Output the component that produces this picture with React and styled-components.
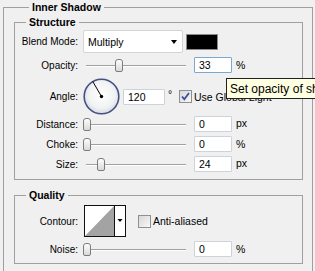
import React from 'react';
import styled, { createGlobalStyle } from 'styled-components';

const Global = createGlobalStyle`
  html, body {
    margin: 0;
    padding: 0;
    background: #f0f0f0;
    overflow: hidden;
  }
  body {
    font-family: "Liberation Sans", Arial, sans-serif;
    font-size: 10px;
    color: #000;
  }
`;

const Page = styled.div`
  position: relative;
  width: 315px;
  height: 271px;
  overflow: hidden;
  padding-left: 3px;
  box-sizing: border-box;
`;

const Group = styled.fieldset`
  box-sizing: border-box;
  margin: ${(p) => p.$margin || '0'};
  padding: ${(p) => p.$padding || '0'};
  width: ${(p) => p.$width}px;
  height: ${(p) => p.$height}px;
  min-width: 0;
  border: 1px solid #a0a0a0;
`;

const Title = styled.legend`
  font-weight: bold;
  font-size: 10.5px;
  line-height: 14px;
  padding: 0 3px;
  margin-left: ${(p) => p.$indent}px;
`;

const Row = styled.div`
  display: flex;
  align-items: center;
  height: ${(p) => p.$h}px;
  margin-top: ${(p) => p.$mt}px;
`;

const Label = styled.span`
  width: 64px;
  flex: none;
  text-align: right;
  padding-right: 1px;
  box-sizing: border-box;
  margin-right: 4px;
  white-space: nowrap;
`;

const Select = styled.div`
  box-sizing: border-box;
  width: 100px;
  height: 23px;
  background: #fff;
  border: 1px solid #d4d4d4;
  border-radius: 2px;
  display: flex;
  align-items: center;
  justify-content: space-between;
  padding: 0 5px 0 4px;
  font-size: 10.5px;
`;

const Arrow = styled.span`
  width: 0;
  height: 0;
  border-left: 3.5px solid transparent;
  border-right: 3.5px solid transparent;
  border-top: 4px solid #000;
  margin-top: 1px;
`;

const Swatch = styled.div`
  box-sizing: border-box;
  width: 32px;
  height: 16px;
  margin-left: 3px;
  background: #000;
  border: 1px solid #8a8a8a;
`;

const SliderBox = styled.div`
  position: relative;
  width: 106px;
  height: 13px;
  flex: none;
`;

const Track = styled.div`
  position: absolute;
  left: 3px;
  right: 3px;
  top: 6px;
  height: 0;
  border-top: 1px solid #a0a0a0;
  border-bottom: 1px solid #fff;
`;

const Thumb = styled.div`
  position: absolute;
  top: 0;
  box-sizing: border-box;
  width: 8px;
  height: 13px;
  border: 1px solid #7c7c7c;
  border-radius: 3px 3px 2px 2px;
  background: linear-gradient(#fdfdfd, #d9d9d9);
`;

const Field = styled.div`
  box-sizing: border-box;
  width: ${(p) => p.$w}px;
  height: 16px;
  margin-left: ${(p) => p.$ml}px;
  background: #fff;
  border: 1px solid ${(p) => (p.$focus ? '#7aa7d6' : '#cdd3da')};
  border-radius: 1px;
  padding-left: 4px;
  display: flex;
  align-items: center;
  font-size: 10.5px;
  flex: none;
`;

const Unit = styled.span`
  margin-left: 4px;
  font-size: 10.5px;
  margin-top: ${(p) => p.$up || 0}px;
`;

const Degree = styled.span`
  width: 11px;
  margin-left: 3px;
  font-size: 10.5px;
  align-self: flex-start;
  margin-top: 10px;
`;

const Box = styled.div`
  box-sizing: border-box;
  width: ${(p) => p.$s}px;
  height: ${(p) => p.$s}px;
  margin-left: ${(p) => p.$ml}px;
  border: 1px solid #8f8f8f;
  background: linear-gradient(135deg, #d8d8d8, #f8f8f8);
  display: flex;
  align-items: center;
  justify-content: center;
  flex: none;
`;

const BoxText = styled.span`
  margin-left: 2px;
  font-size: 10.5px;
  white-space: nowrap;
`;

const ContourPick = styled.svg`
  display: block;
  margin-left: 1px;
  flex: none;
`;

const Tip = styled.div`
  position: absolute;
  left: 226px;
  top: 78px;
  height: 21px;
  width: 110px;
  box-sizing: border-box;
  background: #ffffe1;
  border: 1px solid #202020;
  padding-left: 3px;
  display: flex;
  align-items: center;
  font-size: 12px;
  white-space: nowrap;
`;

const Slider = ({ pos }) => (
  <SliderBox>
    <Track />
    <Thumb style={{ left: Math.round(pos * 98) }} />
  </SliderBox>
);

const Dial = () => (
  <svg width="37" height="37" viewBox="0 0 37 37" style={{ flex: 'none' }}>
    <defs>
      <radialGradient id="dialFill" cx="50%" cy="45%" r="55%">
        <stop offset="0%" stopColor="#ffffff" />
        <stop offset="70%" stopColor="#f1f2f4" />
        <stop offset="100%" stopColor="#d6dae3" />
      </radialGradient>
    </defs>
    <circle cx="18.5" cy="18.5" r="17.3" fill="url(#dialFill)" stroke="#43527f" strokeWidth="1.6" />
    <line x1="18.5" y1="18.5" x2="9.8" y2="3.6" stroke="#000" strokeWidth="1" />
    <circle cx="18.5" cy="18.5" r="1.7" fill="#000" />
  </svg>
);

const Check = () => (
  <svg width="9" height="9" viewBox="0 0 9 9">
    <path d="M1 4.5 L3.3 7.2 L8 1" fill="none" stroke="#3b50a0" strokeWidth="1.8" />
  </svg>
);

export default function App() {
  return (
    <Page>
      <Global />
      <Group $width={310} $height={290} $padding="1px 0 0 10px">
        <Title $indent={15}>Inner Shadow</Title>

        <Group $width={289} $height={165}>
          <Title $indent={11}>Structure</Title>
          <Row $h={23} $mt={1}>
            <Label>Blend Mode:</Label>
            <Select>
              Multiply
              <Arrow />
            </Select>
            <Swatch />
          </Row>
          <Row $h={16} $mt={4}>
            <Label>Opacity:</Label>
            <Slider pos={0.33} />
            <Field $w={38} $ml={5} $focus>33</Field>
            <Unit>%</Unit>
          </Row>
          <Row $h={37} $mt={5}>
            <Label>Angle:</Label>
            <Dial />
            <Field $w={42} $ml={3}>120</Field>
            <Degree>°</Degree>
            <Box $s={13} $ml={0}>
              <Check />
            </Box>
            <BoxText>Use Global Light</BoxText>
          </Row>
          <Row $h={16} $mt={1}>
            <Label>Distance:</Label>
            <Slider pos={0} />
            <Field $w={38} $ml={5}>0</Field>
            <Unit $up={-3}>px</Unit>
          </Row>
          <Row $h={16} $mt={4}>
            <Label>Choke:</Label>
            <Slider pos={0} />
            <Field $w={38} $ml={5}>0</Field>
            <Unit>%</Unit>
          </Row>
          <Row $h={16} $mt={4}>
            <Label>Size:</Label>
            <Slider pos={0.14} />
            <Field $w={38} $ml={5}>24</Field>
            <Unit $up={-3}>px</Unit>
          </Row>
        </Group>

        <Group $width={289} $height={76} $margin="8px 0 0 0">
          <Title $indent={11}>Quality</Title>
          <Row $h={32} $mt={3}>
            <Label>Contour:</Label>
            <ContourPick width="42" height="32" viewBox="0 0 42 32">
              <rect x="0.5" y="0.5" width="41" height="31" fill="#fff" stroke="#111" />
              <polygon points="1,31 30,1 30,31" fill="#a3a3a3" />
              <line x1="30.5" y1="0" x2="30.5" y2="32" stroke="#111" />
              <polygon points="33.5,14 38.5,14 36,17" fill="#000" />
            </ContourPick>
            <Box $s={13} $ml={12} />
            <BoxText>Anti-aliased</BoxText>
          </Row>
          <Row $h={16} $mt={4}>
            <Label>Noise:</Label>
            <Slider pos={0} />
            <Field $w={38} $ml={5}>0</Field>
            <Unit>%</Unit>
          </Row>
        </Group>
      </Group>

      <Tip>Set opacity of shadow</Tip>
    </Page>
  );
}
